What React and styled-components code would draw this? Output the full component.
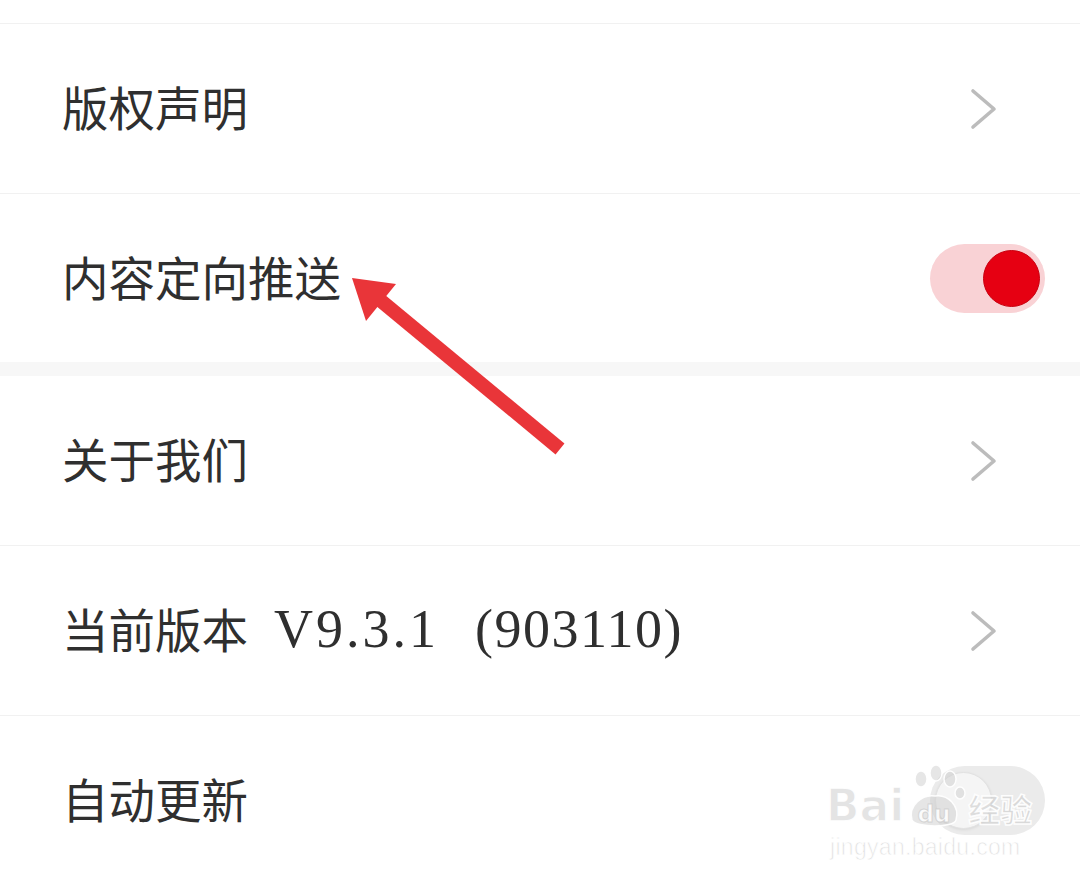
import React from "react";
import styled, { createGlobalStyle } from "styled-components";

const GlobalStyle = createGlobalStyle`
  html, body { margin: 0; padding: 0; background: #ffffff; }
  body { font-family: "Noto Sans CJK SC", "Noto Sans", sans-serif; }
`;

const Page = styled.div`
  position: relative;
  width: 1080px;
  height: 885px;
  overflow: hidden;
  background: #ffffff;
`;

const TopSpacer = styled.div`
  height: 23px;
  border-bottom: 1px solid #f1f1f1;
`;

const Row = styled.div`
  display: flex;
  align-items: center;
  justify-content: space-between;
  height: ${(p) => p.$h || 169}px;
  padding: 0 35px 0 62px;
  border-bottom: ${(p) => (p.$line ? "1px solid #f1f1f1" : "none")};
`;

const SectionGap = styled.div`
  height: 14px;
  background: #f7f7f7;
`;

const Label = styled.span`
  display: inline-flex;
  align-items: center;
  font-size: 46.5px;
  line-height: 1;
  color: #2f2f2f;
  white-space: nowrap;
  margin-top: -4px;
`;

const Version = styled.span`
  font-family: "Liberation Serif", "DejaVu Serif", serif;
  font-size: 54px;
  letter-spacing: 3px;
  margin-left: 26px;
`;

const Build = styled.span`
  font-family: "Liberation Serif", "DejaVu Serif", serif;
  font-size: 54px;
  letter-spacing: 1.5px;
  margin-left: 36px;
`;

const ChevronSvg = styled.svg`
  width: 30px;
  height: 44px;
  margin-right: 46px;
  flex: none;
`;

const Track = styled.div`
  position: relative;
  width: 115px;
  height: 69px;
  border-radius: 35px;
  background: ${(p) => (p.$on ? "#f9d2d5" : "#ebebeb")};
  flex: none;
`;

const Thumb = styled.div`
  position: absolute;
  top: 6px;
  ${(p) => (p.$on ? "right: 5px;" : "left: 5px;")}
  width: 57px;
  height: 57px;
  border-radius: 50%;
  box-sizing: border-box;
  background: ${(p) => (p.$on ? "#e60012" : "#f5f5f5")};
  border: 1px solid ${(p) => (p.$on ? "#c8000f" : "#e2e2e2")};
  box-shadow: ${(p) => (p.$on ? "none" : "0 1px 3px rgba(0,0,0,0.08)")};
`;

const Overlay = styled.svg`
  position: absolute;
  left: 0;
  top: 0;
  width: 1080px;
  height: 885px;
  pointer-events: none;
`;

const Watermark = styled.div`
  position: absolute;
  left: 826px;
  top: 760px;
  width: 220px;
  pointer-events: none;
  display: flex;
  flex-direction: column;
`;

const MarkTop = styled.div`
  display: flex;
  align-items: flex-end;
  height: 70px;
`;

const MarkBai = styled.span`
  font-family: "DejaVu Sans", "Liberation Sans", sans-serif;
  font-size: 44px;
  font-weight: 700;
  line-height: 1;
  color: rgba(205, 205, 205, 0.55);
  -webkit-text-stroke: 1.5px rgba(255, 255, 255, 0.95);
  margin-bottom: 2px;
`;

const MarkJy = styled.span`
  font-family: "Noto Sans CJK SC", sans-serif;
  font-size: 32px;
  font-weight: 700;
  line-height: 1;
  color: rgba(205, 205, 205, 0.6);
  -webkit-text-stroke: 1.5px rgba(255, 255, 255, 0.95);
  margin-bottom: 6px;
`;

const MarkUrl = styled.span`
  font-family: "Liberation Sans", sans-serif;
  font-size: 23px;
  line-height: 1;
  margin-top: 6px;
  margin-left: 4px;
  color: rgba(205, 205, 205, 0.65);
  -webkit-text-stroke: 1px rgba(255, 255, 255, 0.9);
  letter-spacing: 0.3px;
`;

const Chevron = () => (
  <ChevronSvg viewBox="0 0 30 44">
    <polyline
      points="4,4 25,22 4,40"
      fill="none"
      stroke="#bcbcbc"
      strokeWidth="3.6"
      strokeLinecap="round"
      strokeLinejoin="round"
    />
  </ChevronSvg>
);

const Toggle = ({ on }) => (
  <Track $on={on}>
    <Thumb $on={on} />
  </Track>
);

const Paw = () => (
  <svg width="64" height="66" viewBox="0 0 64 66">
    <g fill="rgba(205,205,205,0.5)" stroke="rgba(255,255,255,0.95)" strokeWidth="1.5">
      <ellipse cx="17" cy="15" rx="6" ry="8" />
      <ellipse cx="32" cy="9" rx="6" ry="8" />
      <ellipse cx="46" cy="15" rx="6" ry="8" />
      <ellipse cx="56" cy="29" rx="5" ry="6" />
      <path d="M8 56 C4 42, 18 30, 31 32 C44 30, 56 42, 52 56 C50 64, 12 64, 8 56 Z" />
    </g>
    <text
      x="30"
      y="58"
      textAnchor="middle"
      fontFamily="DejaVu Sans, sans-serif"
      fontWeight="700"
      fontSize="23"
      fill="rgba(255,255,255,0.9)"
      stroke="rgba(200,200,200,0.7)"
      strokeWidth="1"
    >
      du
    </text>
  </svg>
);

export default function App() {
  return (
    <>
      <GlobalStyle />
      <Page>
        <TopSpacer />
        <Row $line>
          <Label>版权声明</Label>
          <Chevron />
        </Row>
        <Row $h={168}>
          <Label>内容定向推送</Label>
          <Toggle on />
        </Row>
        <SectionGap />
        <Row $line>
          <Label>关于我们</Label>
          <Chevron />
        </Row>
        <Row $line>
          <Label>
            当前版本<Version>V9.3.1</Version>
            <Build>(903110)</Build>
          </Label>
          <Chevron />
        </Row>
        <Row>
          <Label>自动更新</Label>
          <Toggle on={false} />
        </Row>

        <Overlay viewBox="0 0 1080 885">
          <line
            x1="560"
            y1="449"
            x2="380"
            y2="300"
            stroke="#e93539"
            strokeWidth="14"
            strokeLinecap="butt"
          />
          <polygon points="352,278 396,284 366,321" fill="#e93539" />
        </Overlay>

        <Watermark>
          <MarkTop>
            <MarkBai>Bai</MarkBai>
            <Paw />
            <MarkJy>经验</MarkJy>
          </MarkTop>
          <MarkUrl>jingyan.baidu.com</MarkUrl>
        </Watermark>
      </Page>
    </>
  );
}
